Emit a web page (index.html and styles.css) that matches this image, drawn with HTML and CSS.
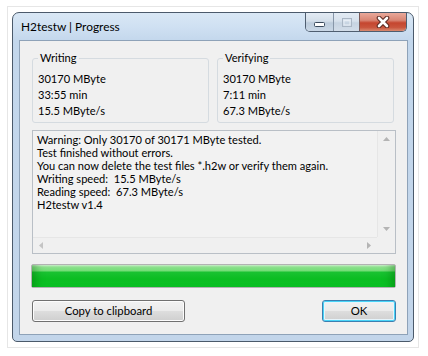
FILE: index.html
```html
<!DOCTYPE html>
<html>
<head>
<meta charset="utf-8">
<link rel="stylesheet" href="styles.css">
</head>
<body>
<div class="frame">
  <div class="window">
    <div class="titlebar">
      <span class="title">H2testw | Progress</span>
      <div class="caption-btns">
        <div class="cap min"><svg width="11" height="5" viewBox="0 0 11 5"><rect x="0.5" y="0.5" width="10" height="4" rx="1" fill="#fff" stroke="#3a4a5c"/></svg></div>
        <div class="cap max"><svg width="10" height="9" viewBox="0 0 10 9"><rect x="0.5" y="0.5" width="9" height="8" fill="none" stroke="#aab6c4"/><rect x="2" y="2.5" width="6" height="4.5" fill="none" stroke="#e8eef5"/></svg></div>
        <div class="cap close"><svg width="14" height="12" viewBox="0 0 14 12"><path d="M3 2 L11 10 M11 2 L3 10" stroke="#5b2a22" stroke-width="4.6" stroke-linecap="round"/><path d="M3 2 L11 10 M11 2 L3 10" stroke="#fff" stroke-width="2.6" stroke-linecap="round"/></svg></div>
      </div>
    </div>
    <div class="client">
      <div class="groups">
        <fieldset class="group">
          <legend>Writing</legend>
          <div class="val">30170 MByte</div>
          <div class="val">33:55 min</div>
          <div class="val">15.5 MByte/s</div>
        </fieldset>
        <fieldset class="group">
          <legend>Verifying</legend>
          <div class="val">30170 MByte</div>
          <div class="val">7:11 min</div>
          <div class="val">67.3 MByte/s</div>
        </fieldset>
      </div>
      <div class="log">
        <div class="log-main">
          <div class="log-text">
            <div>Warning: Only 30170 of 30171 MByte tested.</div>
            <div>Test finished without errors.</div>
            <div>You can now delete the test files *.h2w or verify them again.</div>
            <div>Writing speed:&nbsp; 15.5 MByte/s</div>
            <div>Reading speed:&nbsp; 67.3 MByte/s</div>
            <div>H2testw v1.4</div>
          </div>
          <div class="vscroll">
            <svg class="arr" width="7" height="4" viewBox="0 0 7 4"><path d="M0 4 L3.5 0 L7 4 Z" fill="#b4b4b4"/></svg>
            <svg class="arr" width="7" height="4" viewBox="0 0 7 4"><path d="M0 0 L3.5 4 L7 0 Z" fill="#b4b4b4"/></svg>
          </div>
        </div>
        <div class="hscroll-row">
          <div class="hscroll">
            <svg class="arr" width="4" height="7" viewBox="0 0 4 7"><path d="M4 0 L0 3.5 L4 7 Z" fill="#c4c4c4"/></svg>
            <svg class="arr" width="4" height="7" viewBox="0 0 4 7"><path d="M0 0 L4 3.5 L0 7 Z" fill="#b4b4b4"/></svg>
          </div>
          <div class="corner"></div>
        </div>
      </div>
      <div class="progress"><div class="bar"></div></div>
      <div class="buttons">
        <button class="btn copy">Copy to clipboard</button>
        <button class="btn ok">OK</button>
      </div>
    </div>
  </div>
</div>
</body>
</html>
```
FILE: styles.css
```css
html, body {
  margin: 0;
  padding: 0;
  background: #ffffff;
}
body {
  font-family: "Lato", "Noto Sans", "Liberation Sans", sans-serif;
  font-size: 11.1px;
  color: #000;
}
.frame {
  box-sizing: border-box;
  margin: 6px 0 0 7px;
  width: 412px;
  height: 342px;
  border: 1px solid #e6e6e6;
  padding: 5px 0 0 4px;
}
.window {
  box-sizing: border-box;
  width: 402px;
  height: 330px;
  border: 1px solid #4b5a6b;
  border-radius: 7px 7px 5px 5px;
  background: linear-gradient(180deg, #d9e7f5 0px, #cfe0f2 14px, #c3d7ec 28px, #c2d5ea 100%);
  padding: 0 5px 6px 6px;
  display: flex;
  flex-direction: column;
}
.titlebar {
  height: 27px;
  display: flex;
  align-items: flex-start;
  justify-content: space-between;
}
.title {
  margin-top: 5px;
  padding-left: 2px;
  font-size: 11.9px;
  line-height: 17px;
  color: #000;
}
.caption-btns {
  display: flex;
  margin-right: 1px;
  height: 18px;
  border: 1px solid #4f5e70;
  border-top: none;
  border-radius: 0 0 5px 5px;
  overflow: hidden;
}
.cap {
  display: flex;
  align-items: center;
  justify-content: center;
  height: 18px;
}
.cap.min {
  width: 27px;
  background: linear-gradient(180deg, #e3ebf4 0%, #d3dee9 45%, #bccbdb 55%, #c9d7e6 100%);
  border-right: 1px solid #8796a8;
  align-items: flex-end;
}
.cap.min svg { margin-bottom: 4px; }
.cap.max {
  width: 25px;
  background: linear-gradient(180deg, #e3ebf4 0%, #d7e1ec 45%, #c6d3e1 55%, #d2dde9 100%);
  border-right: 1px solid #7a5a58;
}
.cap.close {
  width: 46px;
  background: linear-gradient(180deg, #e9a99b 0%, #d98674 40%, #c5462f 55%, #c9553d 80%, #d98a70 100%);
}
.client {
  flex: 1;
  box-sizing: border-box;
  border: 1px solid #8ea2b8;
  background: #f0f0f0;
  padding: 9px 11px 0 12px;
  display: flex;
  flex-direction: column;
}
.groups {
  display: flex;
  gap: 8px;
  margin-right: 2px;
}
.group {
  flex: 1;
  margin: 0;
  border: 1px solid #d5dbe0;
  border-radius: 3px;
  padding: 5px 5px 3px 5px;
  min-width: 0;
}
.group legend {
  padding: 0 2px;
  line-height: 16px;
  color: #000;
}
.val {
  line-height: 16px;
}
.log {
  margin-top: 7px;
  height: 124px;
  box-sizing: border-box;
  border: 1px solid #b9bfc6;
  background: #f2f2f2;
  display: flex;
  flex-direction: column;
}
.log-main {
  flex: 1;
  display: flex;
  min-height: 0;
}
.log-text {
  flex: 1;
  padding: 2px 0 0 4px;
  line-height: 13px;
}
.vscroll {
  width: 17px;
  background: #f0f0f0;
  border-left: 1px solid #e6e6e6;
  display: flex;
  flex-direction: column;
  justify-content: space-between;
  align-items: center;
  padding: 6px 0 6px 0;
}
.hscroll-row {
  height: 16px;
  display: flex;
}
.hscroll {
  flex: 1;
  background: #f0f0f0;
  border-top: 1px solid #e6e6e6;
  display: flex;
  justify-content: space-between;
  align-items: center;
  padding: 0 6px;
}
.corner {
  width: 18px;
  background: #f0f0f0;
}
.progress {
  margin: 10px 0 0 -1px;
  height: 24px;
  box-sizing: border-box;
  border: 1px solid #b2b2b2;
  border-radius: 2px;
  background: #e6e6e6;
  padding: 0;
}
.bar {
  height: 100%;
  background: linear-gradient(180deg, #d6f5d6 0px, #8fe38f 2px, #71dc74 6px, #1ac232 7px, #0bbd22 14px, #0cc426 100%);
  box-shadow: inset 10px 0 8px -6px rgba(0, 90, 0, 0.35), inset -10px 0 8px -6px rgba(0, 90, 0, 0.35);
}
.buttons {
  margin-top: 12px;
  display: flex;
  justify-content: space-between;
}
.btn {
  height: 22px;
  box-sizing: border-box;
  font-family: inherit;
  font-size: 11.3px;
  color: #000;
  border: 1px solid #707070;
  border-radius: 3px;
  background: linear-gradient(180deg, #f2f2f2 0%, #ebebeb 48%, #dddddd 52%, #cfcfcf 100%);
  box-shadow: inset 0 0 0 1px #fcfcfc;
  padding: 0;
  line-height: 18px;
}
.btn.copy {
  width: 153px;
}
.btn.ok {
  width: 74px;
  border-color: #3c7fb1;
  box-shadow: inset 0 0 0 1px #48d4f7, inset 0 0 0 2px #e6f4fb;
}
```
